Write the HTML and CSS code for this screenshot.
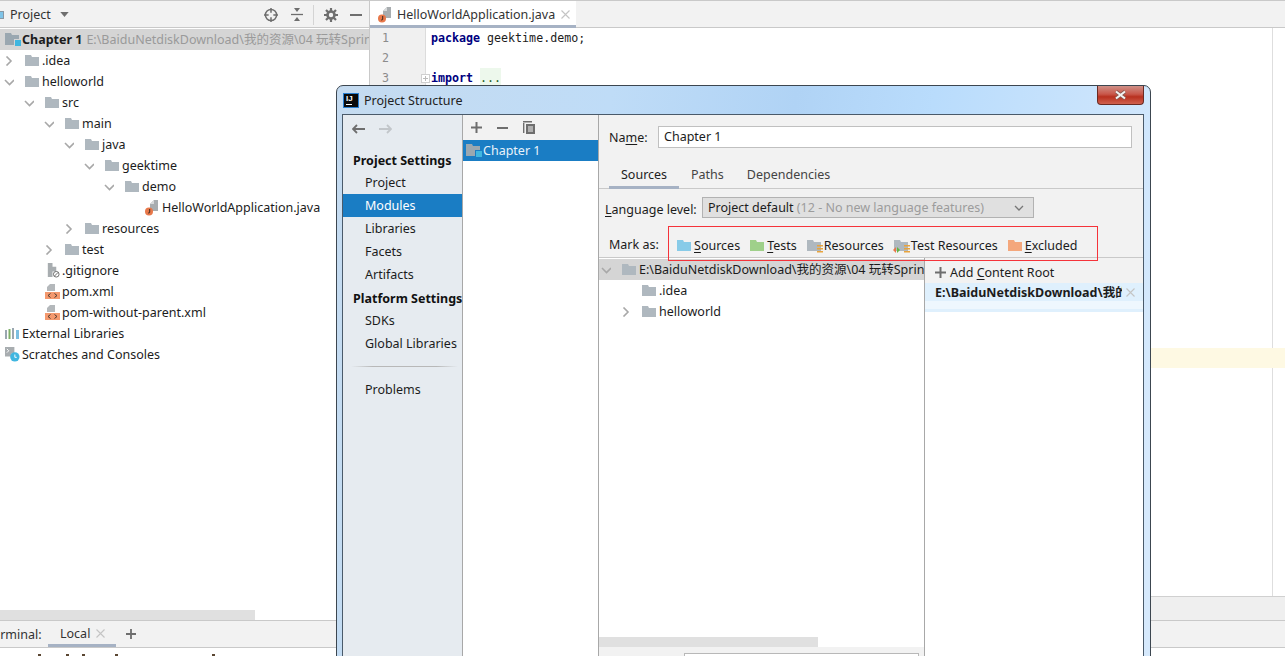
FILE: index.html
```html
<!DOCTYPE html>
<html lang="en">
<head>
<meta charset="utf-8">
<title>Project Structure</title>
<link rel="stylesheet" href="styles.css">
</head>
<body>
<svg class="defs" width="0" height="0" aria-hidden="true">
  <symbol id="folder" viewBox="0 0 14 11"><path d="M0 0h6l1 2h7v9H0z"/></symbol>
  <symbol id="chev-r" viewBox="0 0 10 10"><path d="M2.500.500l4.500 4.500-4.500 4.500" fill="none" stroke="#a8a8a8" stroke-width="1.600"/></symbol>
  <symbol id="chev-d" viewBox="0 0 10 10"><path d="M1 3l4.500 4.500L10 3" fill="none" stroke="#a8a8a8" stroke-width="1.600"/></symbol>
  <symbol id="module" viewBox="0 0 16 14"><path d="M0 0h6l1 2h7v4H9v6H0z" fill="#9aa7b0"/><path d="M10 7h6v6h-6z" fill="#40b6e0"/></symbol>
  <symbol id="java" viewBox="0 0 14 16"><path d="M9 0h4v11H5V4z" fill="#a8adb0"/><path d="M9 0v4H5z" fill="#d8dadb"/><circle cx="4" cy="11.500" r="4" fill="#e8784a"/><path d="M4.700 9v3.200q0 1-1.500.8" fill="none" stroke="#3a2a20"/></symbol>
  <symbol id="file-ignore" viewBox="0 0 16 16"><path d="M3 0h5v4h4v5H8v6H3z" fill="#a8adb0"/><circle cx="12" cy="12" r="3" fill="#fff" stroke="#666"/><path d="M10 14l4-4" stroke="#666"/></symbol>
  <symbol id="xml" viewBox="0 0 15 15"><path d="M5 0h5v7H2V3z" fill="#b4b8bb"/><path d="M0 8h15v7H0z" fill="#f4996e"/><path d="M5.500 9.500l-2.500 2 2.500 2M9.500 9.500l2.500 2-2.500 2" fill="none" stroke="#4a3a30"/></symbol>
  <symbol id="libs" viewBox="0 0 14 11"><path d="M0 2h2v9H0z" fill="#9aa7b0"/><path d="M3.500 1h2v10h-2z" fill="#7fb069"/><path d="M7 0h2v11H7z" fill="#9aa7b0"/><path d="M11 2h3v9h-3z" fill="#7cbfe0"/></symbol>
  <symbol id="scratch" viewBox="0 0 16 16"><path d="M0 0h10v7H7v3H0z" fill="#a8adb0"/><path d="M2 2l2 2-2 2" fill="none" stroke="#fff"/><circle cx="10.500" cy="10.500" r="5" fill="#40b6e0"/><path d="M10.500 8v3h2" fill="none" stroke="#fff"/></symbol>
  <symbol id="plus" viewBox="0 0 11 11"><path d="M5.500 0v11M0 5.500h11" stroke="currentColor" stroke-width="2"/></symbol>
  <symbol id="close" viewBox="0 0 9 9"><path d="M.5.500l8 8M8.500.500l-8 8" stroke="#c4c4c4" stroke-width="1.100"/></symbol>
  <symbol id="res" viewBox="0 0 6 8"><path d="M0 0h6v1.500H0zM0 3h6v1.500H0zM0 6h6v1.500H0z" fill="#e8a33d"/></symbol>
</svg>

<div class="ide">
  <div class="ide-main">
    <aside class="project">
      <header class="panel-head">
        <span class="head-logo"></span>
        <span class="head-title">Project</span>
        <svg class="head-caret" width="9" height="5" viewBox="0 0 10 6"><path d="M0 0h10L5 6z" fill="#6e6e6e"/></svg>
        <span class="head-spacer"></span>
        <svg class="hi-target" width="14" height="14" viewBox="0 0 15 15"><circle cx="7.500" cy="7.500" r="6" fill="none" stroke="#6e6e6e" stroke-width="1.600"/><path d="M7.500 0v5M7.500 10v5M0 7.500h5M10 7.500h5" stroke="#6e6e6e" stroke-width="1.600"/></svg>
        <svg class="hi-collapse" width="12" height="13" viewBox="0 0 12 13"><path d="M0 6.500h12" stroke="#6e6e6e" stroke-width="1.300"/><path d="M3 0h6L6 4zM3 13h6l-3-4z" fill="#6e6e6e"/></svg>
        <span class="head-sep"></span>
        <svg class="hi-gear" width="14" height="14" viewBox="0 0 14 14"><circle cx="7" cy="7" r="3.500" fill="none" stroke="#6e6e6e" stroke-width="2.600"/><path d="M7 0v3M7 11v3M0 7h3M11 7h3M2 2l2 2M10 10l2 2M12 2l-2 2M4 10l-2 2" stroke="#6e6e6e" stroke-width="2.200"/></svg>
        <svg class="hi-min" width="12" height="2" viewBox="0 0 12 2"><path d="M0 0h12v2H0z" fill="#6e6e6e"/></svg>
      </header>
      <div class="tree">
        <div class="row row-selected"><svg class="mod-icon" width="16" height="14"><use href="#module"/></svg><b class="root-name">Chapter 1</b><span class="root-path">E:\BaiduNetdiskDownload\我的资源\04 玩转Spring</span></div>
        <div class="row"><svg class="chev" width="10" height="10"><use href="#chev-r"/></svg><svg class="fold" width="14" height="11"><use href="#folder"/></svg>.idea</div>
        <div class="row"><svg class="chev" width="10" height="10"><use href="#chev-d"/></svg><svg class="fold" width="14" height="11"><use href="#folder"/></svg>helloworld</div>
        <div class="row lvl1"><svg class="chev" width="10" height="10"><use href="#chev-d"/></svg><svg class="fold" width="14" height="11"><use href="#folder"/></svg>src</div>
        <div class="row lvl2"><svg class="chev" width="10" height="10"><use href="#chev-d"/></svg><svg class="fold" width="14" height="11"><use href="#folder"/></svg>main</div>
        <div class="row lvl3"><svg class="chev" width="10" height="10"><use href="#chev-d"/></svg><svg class="fold" width="14" height="11"><use href="#folder"/></svg>java</div>
        <div class="row lvl4"><svg class="chev" width="10" height="10"><use href="#chev-d"/></svg><svg class="fold" width="14" height="11"><use href="#folder"/></svg>geektime</div>
        <div class="row lvl5"><svg class="chev" width="10" height="10"><use href="#chev-d"/></svg><svg class="fold" width="14" height="11"><use href="#folder"/></svg>demo</div>
        <div class="row lvl6"><svg class="file" width="14" height="16"><use href="#java"/></svg>HelloWorldApplication.java</div>
        <div class="row lvl3"><svg class="chev" width="10" height="10"><use href="#chev-r"/></svg><svg class="fold" width="14" height="11"><use href="#folder"/></svg>resources</div>
        <div class="row lvl2"><svg class="chev" width="10" height="10"><use href="#chev-r"/></svg><svg class="fold" width="14" height="11"><use href="#folder"/></svg>test</div>
        <div class="row lvl-file"><svg class="file" width="15" height="15"><use href="#file-ignore"/></svg>.gitignore</div>
        <div class="row lvl-file"><svg class="file" width="15" height="15"><use href="#xml"/></svg>pom.xml</div>
        <div class="row lvl-file"><svg class="file" width="15" height="15"><use href="#xml"/></svg>pom-without-parent.xml</div>
        <div class="row lvl-top"><svg class="file-top" width="14" height="11"><use href="#libs"/></svg>External Libraries</div>
        <div class="row lvl-top"><svg class="file-scratch" width="15" height="15"><use href="#scratch"/></svg>Scratches and Consoles</div>
      </div>
      <div class="hscroll"></div>
    </aside>
    <main class="editor">
      <div class="tabstrip">
        <div class="tab"><svg class="file" width="14" height="16"><use href="#java"/></svg>HelloWorldApplication.java<svg class="tab-close" width="9" height="9"><use href="#close"/></svg></div>
      </div>
      <div class="code">
        <div class="line"><span class="num">1</span><span class="src"><span class="kw">package</span> geektime.demo;</span></div>
        <div class="line"><span class="num">2</span><span class="src"></span></div>
        <div class="line"><span class="num">3</span><span class="src"><span class="fold-box"></span><span class="kw">import</span> <span class="dots">...</span></span></div>
        <div class="line caret-line"><span class="num"></span><span class="src"></span></div>
      </div>
      <div class="breadcrumb"></div>
    </main>
  </div>
  <div class="term-bar">
    <span class="term-label">Terminal:</span>
    <span class="term-tab">Local<svg class="term-close" width="9" height="9"><use href="#close"/></svg></span>
    <svg class="term-plus" width="10" height="10"><use href="#plus"/></svg>
  </div>
  <div class="term-body"><span class="tick t1"></span><span class="tick t2"></span><span class="tick t3"></span><span class="tick t4"></span><span class="tick t5"></span></div>

  <section class="dialog">
    <div class="titlebar">
      <span class="ij">IJ</span>
      <span class="title">Project Structure</span>
      <div class="win-close"><svg width="15" height="10" viewBox="0 0 15 10"><path d="M3 1.500l9 7M12 1.500l-9 7" stroke="#8a5a52" stroke-width="3.600"/><path d="M3 1.500l9 7M12 1.500l-9 7" stroke="#f4f4f4" stroke-width="2"/></svg></div>
    </div>
    <div class="frame">
      <nav class="side">
        <div class="nav-arrows">
          <svg width="14" height="10" viewBox="0 0 14 10"><path d="M5 1L1 5l4 4M1 5h12" fill="none" stroke="#6e6e6e" stroke-width="1.800"/></svg>
          <svg width="14" height="10" viewBox="0 0 14 10"><path d="M9 1l4 4-4 4M13 5H1" fill="none" stroke="#c2c6ca" stroke-width="1.800"/></svg>
        </div>
        <div class="side-head side-head-first">Project Settings</div>
        <div class="side-item">Project</div>
        <div class="side-item side-on">Modules</div>
        <div class="side-item">Libraries</div>
        <div class="side-item">Facets</div>
        <div class="side-item">Artifacts</div>
        <div class="side-head">Platform Settings</div>
        <div class="side-item">SDKs</div>
        <div class="side-item">Global Libraries</div>
        <div class="side-rule"></div>
        <div class="side-item">Problems</div>
      </nav>
      <div class="modules">
        <div class="mod-tools">
          <svg class="mt-plus" width="11" height="11"><use href="#plus"/></svg>
          <svg width="11" height="2" viewBox="0 0 11 2"><path d="M0 0h11v2H0z" fill="#6e6e6e"/></svg>
          <svg width="12" height="13" viewBox="0 0 12 13"><path d="M.7 2v10M0 .7h9" stroke="#6e6e6e" stroke-width="1.400"/><path d="M3 3h9v10H3z" fill="#6e6e6e"/><path d="M5 6h5M5 8h5M5 10h5" stroke="#f2f2f2"/></svg>
        </div>
        <div class="mod-row"><svg width="16" height="14"><use href="#module"/></svg>Chapter 1</div>
      </div>
      <div class="detail">
        <div class="name-row"><span class="name-label">Na<u>m</u>e:</span><span class="name-input">Chapter 1</span></div>
        <div class="tabs"><span class="dtab dtab-on">Sources</span><span class="dtab">Paths</span><span class="dtab">Dependencies</span></div>
        <div class="lang-row">
          <span class="lang-label"><u>L</u>anguage level:</span>
          <div class="combo"><span>Project default <span class="muted">(12 - No new language features)</span></span><svg width="10" height="6" viewBox="0 0 10 6"><path d="M1 1l4 4 4-4" fill="none" stroke="#777" stroke-width="1.300"/></svg></div>
        </div>
        <div class="mark-row">
          <span class="mark-label">Mark as:</span>
          <div class="mark-items">
            <span class="mark"><svg class="ic-src" width="14" height="11"><use href="#folder"/></svg><span><u>S</u>ources</span></span>
            <span class="mark"><svg class="ic-test" width="14" height="11"><use href="#folder"/></svg><span><u>T</u>ests</span></span>
            <span class="mark"><span class="ic-wrap"><svg class="fold" width="14" height="11"><use href="#folder"/></svg><svg class="ic-res" width="6" height="8"><use href="#res"/></svg></span><span>Resources</span></span>
            <span class="mark"><span class="ic-wrap"><svg class="fold" width="14" height="11"><use href="#folder"/></svg><svg class="ic-res" width="6" height="8"><use href="#res"/></svg><svg class="ic-tr" width="7" height="6" viewBox="0 0 7 6"><path d="M3 0v6L0 3z" fill="#e8784a"/><path d="M4 0v6l3-3z" fill="#62b543"/></svg></span><span>Test Resources</span></span>
            <span class="mark"><svg class="ic-exc" width="14" height="11"><use href="#folder"/></svg><span><u>E</u>xcluded</span></span>
          </div>
        </div>
        <div class="split">
          <div class="content-tree">
            <div class="ct-scroll">
              <div class="ct-row ct-head"><svg class="chev" width="10" height="10"><use href="#chev-d"/></svg><svg class="fold" width="14" height="11"><use href="#folder"/></svg><span class="ct-path">E:\BaiduNetdiskDownload\我的资源\04 玩转Spring</span></div>
              <div class="ct-row ct-child"><span class="chev-space"></span><svg class="fold" width="14" height="11"><use href="#folder"/></svg>.idea</div>
              <div class="ct-row ct-child"><svg class="chev" width="10" height="10"><use href="#chev-r"/></svg><svg class="fold" width="14" height="11"><use href="#folder"/></svg>helloworld</div>
            </div>
            <div class="ct-hbar"><span class="ct-thumb"></span></div>
            <div class="ct-foot"><span class="ct-field"></span></div>
          </div>
          <div class="roots">
            <div class="add-root"><svg class="ar-plus" width="11" height="11"><use href="#plus"/></svg><span>Add <u>C</u>ontent Root</span></div>
            <div class="root-item"><b class="root-text">E:\BaiduNetdiskDownload\我的</b><svg width="9" height="9"><use href="#close"/></svg></div>
            <div class="root-sub"></div>
          </div>
        </div>
      </div>
    </div>
    <div class="highlight"></div>
  </section>
</div>
</body>
</html>
```

FILE: styles.css
```css
* { box-sizing: border-box; }
html, body { margin: 0; padding: 0; }
body {
  font: 12.500px/1.2 "Noto Sans", "Noto Sans CJK SC", sans-serif;
  color: #1c1c1c;
  background: #fff;
}
.defs { position: absolute; }
svg { flex: none; display: block; }
u { text-decoration-thickness: 1px; text-underline-offset: 2px; }

.ide {
  position: relative;
  width: 1285px;
  height: 656px;
  display: flex;
  flex-direction: column;
  overflow: hidden;
  border-top: 1px solid #c9c9c9;
}
.ide-main { display: flex; height: 619px; }

/* project panel */
.project { width: 370px; display: flex; flex-direction: column; border-right: 1px solid #c9c9c9; }
.panel-head {
  height: 27px;
  display: flex;
  align-items: center;
  padding-right: 7px;
  padding-top: 1px;
  background: #f2f2f2;
  border-bottom: 1px solid #c9c9c9;
  color: #333;
}
.head-logo { width: 4px; height: 8px; margin-right: 6px; background: #7fc4e8; border: 1px solid #8a98a4; border-left: 0; }
.head-caret { margin-left: 9px; }
.head-spacer { flex: 1; }
.hi-collapse { margin-left: 13px; }
.head-sep { width: 1px; height: 20px; background: #d4d4d4; margin-left: 10px; }
.hi-gear { margin-left: 10px; }
.hi-min { margin-left: 12px; }
.tree { flex: 1; overflow: hidden; padding-top: 1px; }
.row { height: 21px; display: flex; align-items: center; white-space: nowrap; padding-left: 4px; overflow: hidden; }
.row-selected { background: #d5d5d5; padding-left: 5px; }
.mod-icon { margin-right: 1px; }
.root-name { font-weight: 700; }
.root-path { color: #9a9a9a; margin-left: 4px; }
.chev { margin-right: 11px; }
.fold { fill: #afb8bf; margin-right: 3px; }
.lvl1 { padding-left: 24px; }
.lvl2 { padding-left: 44px; }
.lvl3 { padding-left: 64px; }
.lvl4 { padding-left: 84px; }
.lvl5 { padding-left: 104px; }
.lvl6 { padding-left: 145px; }
.lvl-file { padding-left: 45px; }
.lvl-top { padding-left: 5px; }
.file { margin-right: 3px; }
.lvl-file .file { margin-right: 2px; }
.file-top { margin-right: 3px; }
.file-scratch { margin-right: 2px; }
.hscroll { height: 10px; width: 255px; flex: none; background: #e0e0e0; }

/* editor */
.editor { flex: 1; display: flex; flex-direction: column; min-width: 0; }
.tabstrip { height: 27px; flex: none; background: #f2f2f2; border-bottom: 1px solid #c9c9c9; }
.tab {
  width: 206px;
  height: 27px;
  display: flex;
  align-items: center;
  padding-left: 8px;
  padding-top: 3px;
  background: #fff;
  border-bottom: 3px solid #a6b2c4;
  color: #333;
}
.tab .file { margin-right: 5px; }
.tab-close { margin-left: 6px; }
.code { position: relative; flex: 1; font: 11.650px/20px "DejaVu Sans Mono", monospace; color: #1c1c1c; }
.code::after { content: ""; position: absolute; left: 902px; top: 0; bottom: 0; width: 1px; background: #dedede; }
.line { display: flex; height: 20px; }
.num { width: 56px; flex: none; background: #f0f0f0; border-right: 1px solid #dcdcdc; padding-left: 12px; color: #8c8c8c; }
.src { position: relative; padding-left: 5px; flex: 1; white-space: pre; }
.kw { color: #000080; font-weight: 700; }
.dots { background: #edf8ec; color: #1f5f1f; display: inline-block; width: 21px; }
.fold-box {
  position: absolute;
  left: -5px;
  top: 6px;
  width: 9px;
  height: 9px;
  border: 1px solid #cfcfcf;
  background:
    linear-gradient(#bbb, #bbb) center / 5px 1px no-repeat,
    linear-gradient(#bbb, #bbb) center / 1px 5px no-repeat,
    #fff;
}
.caret-line { margin-top: 260px; position: relative; z-index: 1; }
.caret-line .src { background: #fef9e3; }
.breadcrumb { height: 24px; flex: none; background: #efefef; border-top: 1px solid #d0d0d0; }

/* terminal */
.term-bar {
  height: 28px;
  flex: none;
  display: flex;
  align-items: center;
  background: #f2f2f2;
  border-top: 1px solid #c9c9c9;
  border-bottom: 1px solid #c9c9c9;
}
.term-label { margin-left: -13px; width: 61px; color: #333; padding-top: 1px; }
.term-tab {
  width: 68px;
  align-self: stretch;
  display: flex;
  align-items: center;
  padding-left: 12px;
  padding-top: 2px;
  border-bottom: 3px solid #a6b2c4;
  color: #333;
}
.term-close { margin-left: 6px; }
.term-plus { margin-left: 10px; color: #6e6e6e; }
.term-body { position: relative; height: 8px; background: #fff; flex: none; }
.tick { position: absolute; top: 6px; width: 3px; height: 2px; background: #5a4632; }
.t1 { left: 38px; }
.t2 { left: 66px; }
.t3 { left: 82px; }
.t4 { left: 115px; }
.t5 { left: 212px; }

/* dialog */
.dialog {
  position: absolute;
  z-index: 2;
  left: 336px;
  top: 84px;
  width: 815px;
  height: 620px;
  display: flex;
  flex-direction: column;
  border: 1px solid #3c4650;
  border-radius: 7px 7px 0 0;
  background: linear-gradient(100deg, #c5dbf0 0%, #bfdcf7 30%, #b0d3f5 50%, #b9dcfc 65%, #d6e9fc 95%);
  padding: 0 6px 0 5px;
}
.titlebar { height: 28px; display: flex; align-items: center; position: relative; flex: none; }
.ij {
  width: 16px;
  height: 15px;
  margin-left: 1px;
  padding: 1px 0 0 2px;
  font: 700 8px/8px "Liberation Sans", sans-serif;
  color: #fff;
  background: linear-gradient(#fff, #fff) 2px 10px / 6px 1px no-repeat, #0a0a0a;
  border: 1px solid #2a7fd0;
}
.title { margin-left: 5px; color: #222; }
.win-close {
  position: absolute;
  right: 0;
  top: 0;
  width: 47px;
  height: 19px;
  display: flex;
  align-items: center;
  justify-content: center;
  border: 1px solid #6b2a22;
  border-top: 0;
  border-radius: 0 0 4px 4px;
  background: linear-gradient(#cf9087 0%, #c9574a 45%, #b8301f 60%, #d0614e 100%);
}
.frame { flex: 1; display: flex; border: 1px solid #4a5a6a; background: #f2f2f2; min-height: 0; }
.side { width: 120px; flex: none; background: #e6ebf0; border-right: 1px solid #a8a8a8; }
.nav-arrows { height: 28px; display: flex; align-items: center; gap: 12px; padding-left: 9px; }
.side-head { height: 23px; display: flex; align-items: center; padding: 2px 0 0 10px; font-weight: 700; white-space: nowrap; color: #111; }
.side-head-first { margin-top: 5px; }
.side-item { height: 23px; display: flex; align-items: center; padding-left: 22px; white-space: nowrap; }
.side-on { background: #1a7dc4; color: #fff; }
.side-rule { height: 1px; margin: 11px 4px 11px 8px; background: linear-gradient(90deg, transparent, #b8b8b8 20%, #b8b8b8 80%, transparent); }
.modules { width: 136px; flex: none; background: #fff; border-right: 1px solid #a8a8a8; }
.mod-tools { height: 25px; background: #f2f2f2; display: flex; align-items: center; gap: 15px; padding-left: 8px; color: #6e6e6e; }
.mod-row { height: 21px; display: flex; align-items: center; gap: 1px; padding-left: 3px; background: #1a7dc4; color: #e8f2fa; }
.detail { flex: 1; display: flex; flex-direction: column; min-width: 0; }
.name-row { height: 45px; flex: none; display: flex; align-items: center; padding: 0 0 1px 10px; }
.name-label { width: 49px; }
.name-input {
  width: 474px;
  height: 22px;
  padding: 2px 5px;
  background: #fff;
  border: 1px solid #c0c0c0;
}
.tabs { height: 29px; flex: none; display: flex; padding-left: 10px; border-bottom: 1px solid #c9c9c9; }
.dtab { padding: 7px 11px 0 12px; color: #444; height: 29px; }
.dtab-on { width: 70px; border-bottom: 3px solid #a6b2c4; color: #222; }
.lang-row { height: 42px; flex: none; display: flex; align-items: flex-start; padding: 8px 0 0 6px; }
.lang-label { width: 97px; padding-top: 5px; }
.combo {
  width: 332px;
  height: 21px;
  padding: 0 9px 0 5px;
  display: flex;
  align-items: center;
  justify-content: space-between;
  background: #e0e0e0;
  border: 1px solid #b2b2b2;
}
.muted { color: #9c9c9c; }
.mark-row { height: 26px; flex: none; display: flex; align-items: center; padding-left: 10px; }
.mark-label { width: 68px; }
.mark-items { display: flex; gap: 10px; margin-top: 2px; }
.mark { display: flex; align-items: center; gap: 3px; white-space: nowrap; }
.ic-src { fill: #88cbe8; }
.ic-test { fill: #9fd08a; }
.ic-exc { fill: #f4a77c; }
.ic-wrap { position: relative; width: 14px; height: 11px; }
.ic-wrap .fold { margin: 0; }
.ic-res { position: absolute; right: -2px; bottom: -2px; }
.ic-tr { position: absolute; left: -1px; bottom: -2px; }
.split { flex: 1; display: flex; min-height: 0; border-top: 1px solid #c9c9c9; }
.content-tree { width: 326px; flex: none; display: flex; flex-direction: column; background: #fff; border-right: 1px solid #a8a8a8; }
.ct-scroll { height: 379px; flex: none; overflow: hidden; }
.ct-row { height: 21px; display: flex; align-items: center; white-space: nowrap; padding-left: 2px; overflow: hidden; }
.ct-head { background: #d5d5d5; margin-top: 1px; }
.ct-child { padding-left: 22px; }
.chev-space { width: 21px; flex: none; }
.ct-hbar { height: 10px; flex: none; }
.ct-thumb { display: block; width: 219px; height: 10px; background: #e0e0e0; }
.ct-foot { flex: 1; background: #f2f2f2; padding: 6px 0 0 85px; }
.ct-field { display: block; width: 235px; height: 40px; background: #fff; border: 1px solid #b8b8b8; }
.roots { flex: 1; min-width: 0; background: #fff; }
.add-root { height: 25px; display: flex; align-items: center; gap: 4px; padding: 3px 0 0 10px; background: #f2f2f2; }
.ar-plus { color: #6e6e6e; }
.root-item { height: 18px; display: flex; align-items: center; padding-left: 10px; background: #dff0fd; }
.root-text { width: 187px; overflow: hidden; white-space: nowrap; }
.root-item svg { margin-left: 4px; }
.root-sub { height: 11px; background: #eef7fe; border-bottom: 3px solid #dff0fd; }
.highlight {
  position: absolute;
  left: 331px;
  top: 140px;
  width: 430px;
  height: 35px;
  border: 1px solid #f5333a;
}
```
